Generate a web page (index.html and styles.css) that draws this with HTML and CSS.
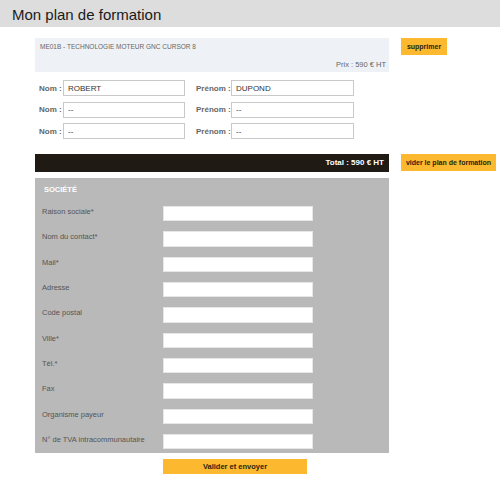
FILE: index.html
```html
<!DOCTYPE html>
<html lang="fr">
<head>
<meta charset="utf-8">
<title>Mon plan de formation</title>
<link rel="stylesheet" href="styles.css">
</head>
<body>
<header class="topbar"><h1 class="title">Mon plan de formation</h1></header>
<main class="page">
  <section class="row product-row">
    <div class="main-col">
      <div class="product">
        <div class="product-name">ME01B - TECHNOLOGIE MOTEUR GNC CURSOR 8</div>
        <div class="product-price">Prix : 590 € HT</div>
      </div>
      <div class="people">
        <div class="person">
          <label class="p-label">Nom :</label><input class="p-input" value="ROBERT">
          <label class="p-label p-label2">Prénom :</label><input class="p-input p-input2" value="DUPOND">
        </div>
        <div class="person">
          <label class="p-label">Nom :</label><input class="p-input" value="--">
          <label class="p-label p-label2">Prénom :</label><input class="p-input p-input2" value="--">
        </div>
        <div class="person">
          <label class="p-label">Nom :</label><input class="p-input" value="--">
          <label class="p-label p-label2">Prénom :</label><input class="p-input p-input2" value="--">
        </div>
      </div>
    </div>
    <div class="side-col"><button class="btn btn-del">supprimer</button></div>
  </section>
  <section class="row total-row">
    <div class="main-col">
      <div class="total">Total : 590 € HT</div>
      <form class="company">
        <div class="company-title">SOCIÉTÉ</div>
        <div class="f-row"><label class="f-label">Raison sociale*</label><input class="f-input"></div>
        <div class="f-row"><label class="f-label">Nom du contact*</label><input class="f-input"></div>
        <div class="f-row"><label class="f-label">Mail*</label><input class="f-input"></div>
        <div class="f-row"><label class="f-label">Adresse</label><input class="f-input"></div>
        <div class="f-row"><label class="f-label">Code postal</label><input class="f-input"></div>
        <div class="f-row"><label class="f-label">Ville*</label><input class="f-input"></div>
        <div class="f-row"><label class="f-label">Tél.*</label><input class="f-input"></div>
        <div class="f-row"><label class="f-label">Fax</label><input class="f-input"></div>
        <div class="f-row"><label class="f-label">Organisme payeur</label><input class="f-input"></div>
        <div class="f-row"><label class="f-label">N° de TVA intracommunautaire</label><input class="f-input"></div>
      </form>
      <div class="submit-wrap"><button class="btn btn-submit">Valider et envoyer</button></div>
    </div>
    <div class="side-col"><button class="btn btn-clear">vider le plan de formation</button></div>
  </section>
</main>
</body>
</html>
```
FILE: styles.css
```css
* { box-sizing: border-box; }
body {
  margin: 0;
  font-family: "Liberation Sans", Arial, sans-serif;
  background: #fff;
  color: #555;
}
.topbar {
  height: 27px;
  background: #dddddd;
  padding-left: 12px;
}
.title {
  margin: 0;
  font-size: 15px;
  font-weight: normal;
  line-height: 29px;
  color: #1a1a1a;
}
.page { padding-left: 35px; }
.row { display: flex; gap: 12px; align-items: flex-start; }
.product-row { margin-top: 11px; }
.main-col { width: 354px; }
.side-col { width: 96px; display: flex; flex-direction: column; align-items: flex-start; }
.product {
  height: 34px;
  background: #eef2f6;
  padding: 4px 3px 0 5px;
  color: #666;
}
.product-name { line-height: 10px; font-size: 6.5px; }
.product-price { text-align: right; margin-top: 8px; line-height: 10px; font-size: 7.5px; }
.btn {
  display: block;
  border: none;
  background: #fcb82e;
  color: #2a1f10;
  font-family: "Liberation Sans", Arial, sans-serif;
  font-weight: bold;
  font-size: 7px;
  padding: 0;
  cursor: pointer;
}
.btn-del { width: 46px; height: 17px; }
.people {
  margin-top: 8px;
  display: flex;
  flex-direction: column;
  gap: 5.5px;
}
.person { display: flex; align-items: center; height: 16px; }
.p-label {
  width: 28px;
  padding-left: 4px;
  font-size: 8px;
  font-weight: bold;
  color: #666;
}
.p-label2 { width: 35px; margin-left: 11px; padding-left: 0; }
.p-input {
  width: 122px;
  height: 16px;
  border: 1px solid #c9c9c9;
  padding: 0 4px;
  font-family: "Liberation Sans", Arial, sans-serif;
  font-size: 8px;
  color: #333;
  background: #fff;
  outline: none;
}
.p-input2 { width: 123px; }
.total-row { margin-top: 15px; }
.total {
  height: 18px;
  background: #1f1a14;
  color: #fff;
  font-weight: bold;
  font-size: 8px;
  text-align: right;
  line-height: 17px;
  padding-right: 5px;
}
.btn-clear { width: 95px; height: 17px; }
.company {
  margin: 6px 0 0;
  background: #b9b9b9;
  padding: 7px 0 4px;
  display: flex;
  flex-direction: column;
  gap: 10px;
}
.company-title {
  color: #fff;
  font-weight: bold;
  font-size: 7.5px;
  padding-left: 9px;
  line-height: 9px;
  margin-bottom: 2px;
}
.f-row { display: flex; align-items: center; height: 15.33px; }
.f-label {
  width: 128px;
  padding-left: 7px;
  font-size: 7.5px;
  color: #555;
  margin-top: -4px;
}
.f-input {
  width: 150px;
  height: 15.33px;
  border: 1px solid #e6e6e6;
  background: #fff;
  outline: none;
}
.submit-wrap { padding-left: 128px; margin-top: 6px; }
.btn-submit { width: 144px; height: 15px; font-size: 7.5px; }
```
